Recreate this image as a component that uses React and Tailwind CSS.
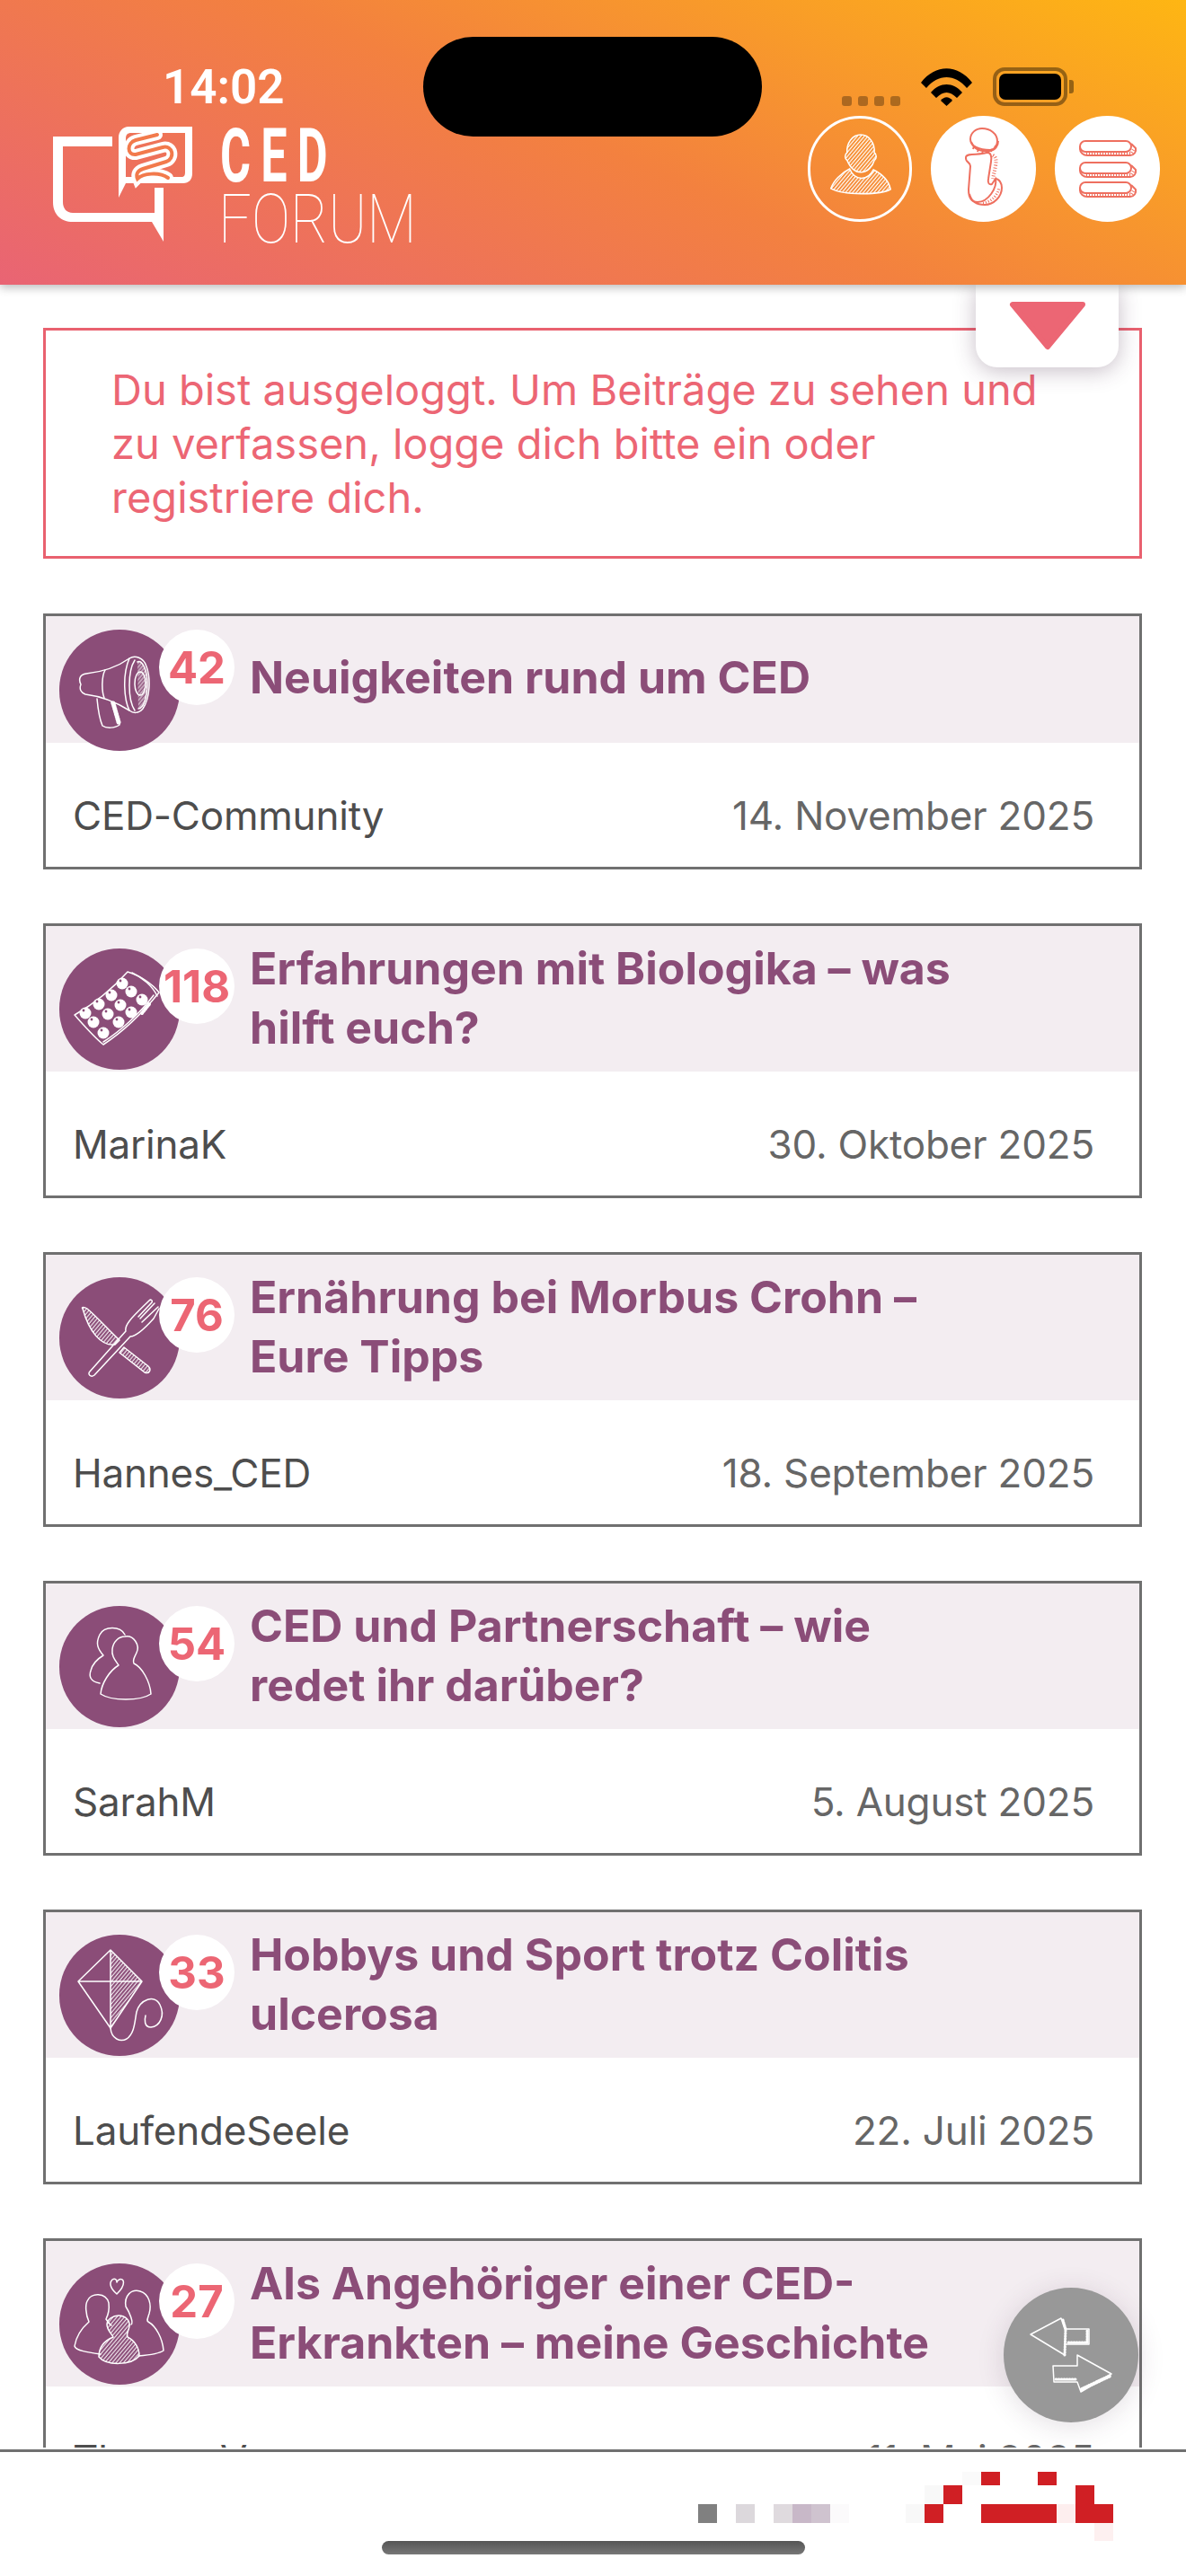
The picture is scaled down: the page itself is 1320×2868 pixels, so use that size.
import React from "react";

const Hatch = ({ id, color = "#fff", size = 4, width = 1 }) => (
  <defs>
    <pattern id={id} width={size} height={size} patternUnits="userSpaceOnUse" patternTransform="rotate(40)">
      <line x1="1" y1="0" x2="1" y2={size} stroke={color} strokeWidth={width} />
    </pattern>
  </defs>
);

const gutPath = "M116 9L92 15C82 18 82 32 92 31L122 23C134 20 136 36 126 39L100 47C94 49 92 53 94 58C100 52 118 50 128 57";

const Logo = () => (
  <svg viewBox="0 0 155 128" className="w-[155px] h-[128px] flex-none">
    <path fill="#fff" d="M66 11H0V84C0 98 9 106 22 106H110L123 128V68H113V96H22C15 96 11 91 11 84V22H66Z" />
    <path
      fill="#fff"
      fillRule="evenodd"
      d="M84 0H155V52C155 59 151 63 145 63H81L73 79V12C73 5 78 0 84 0ZM87 7C83 7 81 9 81 13V56H143C146 56 147 54 147 51V7Z"
    />
    <path fill="none" stroke="#fff" strokeWidth="12" strokeLinecap="round" d={gutPath} />
    <path fill="none" stroke="#f27a4c" strokeWidth="4" strokeLinecap="round" d={gutPath} />
  </svg>
);

const PersonIcon = () => (
  <svg viewBox="0 0 116 118" className="w-full h-full">
    <Hatch id="hatch-user" size={3.2} width={1.2} />
    <path
      fill="url(#hatch-user)"
      stroke="#fff"
      strokeWidth="1.6"
      d="M59 19C69 19 76 29 75 40C78 42 78 47 75 49C73 56 67 63 59 63C51 63 46 56 43 49C40 47 40 42 43 40C42 29 49 19 59 19Z"
    />
    <path
      fill="url(#hatch-user)"
      stroke="#fff"
      strokeWidth="1.6"
      d="M24 82C27 73 36 64 46 59C49 66 54 70 60 70C66 70 71 66 74 60C84 65 92 73 94 83C82 90 38 90 24 82Z"
    />
  </svg>
);

const InfoIcon = () => (
  <svg viewBox="0 0 117 118" className="w-full h-full">
    <g fill="none" stroke="#ee6f5f" strokeWidth="2">
      <path d="M44 26C44 19 50 14 57 14C66 14 74 20 74 28C74 33 71 38 66 38C54 38 44 34 44 26Z" fill="#fff" />
      <path d="M45 29C48 38 57 40 66 39C72 38 75 33 75 28" />
      <path d="M48 34L47 37M53 37L52 40M58 39L57 42M63 39L62 42M68 37L67 40M72 33L71 36" strokeWidth="2" />
      <path d="M39 46C40 41 54 44 62 41C67 40 68 46 67 51L64 70C63 75 65 77 68 76L72 70C74 80 64 96 52 96C45 96 42 90 42 82L44 56C44 51 38 52 39 46Z" />
      <path d="M43 87C45 96 52 99 60 99C70 99 79 90 79 80C79 75 76 70 72 70" />
      <path d="M69 44C73 46 73 50 72 56L69 70" strokeWidth="4" strokeDasharray="1 2" />
      <path d="M58 97C66 96 74 90 76 80" strokeWidth="3" strokeDasharray="1 2" />
    </g>
  </svg>
);

const MenuIcon = () => (
  <svg viewBox="0 0 117 118" className="w-full h-full">
    <g fill="none" stroke="#ee6f5f" strokeWidth="2">
      {[28, 52, 74].map((y) => (
        <g key={y}>
          <rect x="28" y={y} width="57" height="12" rx="6" />
          <path d={`M28 ${y + 6}V${y + 9}C28 ${y + 13} 32 ${y + 16} 36 ${y + 16}H84C88 ${y + 16} 91 ${y + 12} 90 ${y + 8}L85 ${y + 3}`} />
          <path d={`M35 ${y + 14}H85L88 ${y + 9}`} strokeWidth="4" strokeDasharray="1 2" />
        </g>
      ))}
    </g>
  </svg>
);

const Wifi = () => (
  <svg viewBox="0 0 57 42" className="w-[57px] h-[42px]">
    <path d="M0 16C16 -5 41 -5 57 16L51 22C38 6 19 6 6 22Z" />
    <path d="M11 27C21 15 36 15 46 27L40 33C32 25 25 25 17 33Z" />
    <path d="M22 36C26 31 31 31 35 36L28.5 42Z" />
  </svg>
);

const StatusBar = () => (
  <div className="absolute top-[41px] left-0 right-0 flex z-20">
    <div className="w-[471px] pl-[181px] pt-[26px] flex-none">
      <span className="block text-[53px] leading-[60px] font-semibold text-white font-['Roboto',sans-serif]">14:02</span>
    </div>
    <div className="w-[377px] h-[111px] bg-black rounded-full flex-none" />
    <div className="ml-[89px] h-[77px] flex items-end">
      <div className="flex gap-[7.5px]">
        {[0, 1, 2, 3].map((i) => (
          <div key={i} className="w-[10.5px] h-[11px] rounded-[3px] bg-black/30" />
        ))}
      </div>
      <div className="ml-[23px]">
        <Wifi />
      </div>
      <div className="ml-[23px] w-[83px] h-[43px] rounded-[13px] border-[4px] border-black/40 p-[3px]">
        <div className="w-full h-full rounded-[7px] bg-black" />
      </div>
      <div className="ml-[2px] mb-[14px] w-[5px] h-[15px] rounded-r-[3px] bg-black/40" />
    </div>
  </div>
);

const Header = () => (
  <header className="relative z-20 h-[317px] flex-none bg-linear-24/srgb from-[#e96474] via-[#f3813f] via-50% to-[#feb613] shadow-[0_3px_10px_rgba(0,0,0,0.28)] flex items-start justify-between pl-[59px] pr-[29px] pt-[129px]">
    <StatusBar />
    <div className="flex mt-[12px]">
      <Logo />
      <div className="ml-[29px] text-white font-['Roboto',sans-serif]">
        <div className="ml-[2px] h-[76px] leading-[66px] text-[84px] font-bold origin-left scale-x-[0.62] tracking-[18px]">CED</div>
        <div className="h-[54px] leading-[54px] text-[76px] font-thin origin-left scale-x-[0.85]">FORUM</div>
      </div>
    </div>
    <div className="flex gap-[21px]">
      <div className="w-[116px] h-[118px] rounded-full border-[3px] border-white">
        <PersonIcon />
      </div>
      <div className="w-[117px] h-[118px] rounded-full bg-white">
        <InfoIcon />
      </div>
      <div className="w-[117px] h-[118px] rounded-full bg-white">
        <MenuIcon />
      </div>
    </div>
  </header>
);

const stroke = { fill: "none", stroke: "#fff", strokeWidth: 1.5, strokeLinejoin: "round", strokeLinecap: "round" };

const Megaphone = () => (
  <>
    <Hatch id="hatch-mega" size={3} />
    <g {...stroke}>
      <path d="M30 49C23 50 21 55 24 61C22 66 24 70 29 72C45 74 62 80 78 90M30 49C48 47 64 42 78 32" />
      <path d="M51 45C47 52 47 68 50 76" />
      <path d="M78 32C84 28 94 31 97 41C102 55 101 76 93 88C88 94 82 93 78 90C72 78 70 50 78 32Z" />
      <path d="M84 34C76 46 76 78 84 90" />
      <path d="M87 36C93 33 98 47 98 60C98 74 94 88 88 88" fill="url(#hatch-mega)" />
      <ellipse cx="90" cy="60" rx="6" ry="13" />
      <path d="M42 77C43 88 45 100 48 107C52 110 62 110 67 106C68 100 62 90 58 81" />
      <path d="M60 82L66 103" strokeWidth="5" strokeDasharray="1 2" />
    </g>
  </>
);

const pills = [
  [29, 72], [44, 62], [58, 52], [70, 39],
  [38, 82], [54, 73], [68, 63], [80, 48],
  [49, 94], [66, 82], [80, 71], [92, 57],
];

const Blister = () => (
  <>
    <g {...stroke}>
      <path d="M17 74C38 62 58 46 76 26C90 30 104 40 111 49C94 70 72 92 49 107C38 98 26 84 17 74Z" />
      <path d="M81 27C92 32 104 42 109 53M49 104C68 92 90 72 105 52" />
      <path d="M100 62L92 72" strokeWidth="4" strokeDasharray="1 2" />
    </g>
    {pills.map(([x, y]) => (
      <g key={`${x}-${y}`}>
        <circle cx={x} cy={y} r="6.5" fill="#fff" />
        <circle cx={x - 2} cy={y - 3} r="1.4" fill="#8b4d78" />
      </g>
    ))}
  </>
);

const Cutlery = () => (
  <>
    <Hatch id="hatch-cut" size={3.2} />
    <g {...stroke}>
      <path d="M26 35C24 33 28 33 31 35C43 45 56 60 67 70L62 75C46 77 33 60 26 35Z" fill="url(#hatch-cut)" />
      <path d="M72 78L99 99C103 103 100 108 95 106L67 84Z" fill="url(#hatch-cut)" />
      <path d="M34 105C31 108 35 112 39 109L79 66C86 66 96 56 105 46L111 35M34 105L74 60C72 52 84 42 100 26C102 24 104 26 103 28L88 44M110 33L92 50M106 29L90 46" />
    </g>
  </>
);

const Couple = () => (
  <g {...stroke}>
    <path d="M45 86C34 84 33 78 35 72C37 64 44 58 49 55C43 48 40 42 45 32C50 22 68 22 73 32" />
    <path d="M73 34C83 32 90 44 86 52C84 57 81 60 83 64C92 68 101 84 102 98C90 106 58 106 46 98C47 86 56 72 66 66C62 60 58 56 59 48C60 40 66 34 73 34Z" />
  </g>
);

const Kite = () => (
  <>
    <Hatch id="hatch-kite" size={3.2} />
    <g {...stroke}>
      <path d="M57 17L92 52L57 104V17Z" fill="url(#hatch-kite)" stroke="none" />
      <path d="M57 17L92 52L57 104L21 52ZM57 17V104M21 52H92" />
      <path d="M57 104C58 116 68 120 75 116C84 110 84 96 86 86C90 72 106 66 112 78C118 90 112 102 102 103C94 103 95 94 96 90" />
    </g>
  </>
);

const Family = () => (
  <>
    <Hatch id="hatch-fam" size={3.2} />
    <g {...stroke}>
      <path d="M64 34C57 28 55 22 59 18C62 16 64 18 64 21C65 18 69 16 71 19C73 24 69 29 64 34Z" />
      <path d="M46 101C32 99 18 97 17 92C19 80 25 72 33 65C29 56 29 46 31 42C35 32 52 32 55 44C56 52 54 58 52 62C54 65 56 68 58 69" />
      <path d="M80 68C83 66 78 54 74 48C72 36 80 28 90 31C100 34 103 46 100 56C98 62 97 64 99 65C108 70 115 84 116 97C112 100 100 102 88 103" />
      <path
        d="M66 58C74 58 79 64 78 70C77 76 74 78 76 82C84 86 89 94 89 103C80 114 52 114 44 104C44 94 50 86 60 82C58 78 53 74 53 68C53 62 60 58 66 58Z"
        fill="url(#hatch-fam)"
      />
    </g>
  </>
);

const topics = [
  { title: "Neuigkeiten rund um CED", count: 42, author: "CED-Community", date: "14. November 2025", icon: <Megaphone />, single: true },
  { title: "Erfahrungen mit Biologika – was\nhilft euch?", count: 118, author: "MarinaK", date: "30. Oktober 2025", icon: <Blister /> },
  { title: "Ernährung bei Morbus Crohn –\nEure Tipps", count: 76, author: "Hannes_CED", date: "18. September 2025", icon: <Cutlery /> },
  { title: "CED und Partnerschaft – wie\nredet ihr darüber?", count: 54, author: "SarahM", date: "5. August 2025", icon: <Couple /> },
  { title: "Hobbys und Sport trotz Colitis\nulcerosa", count: 33, author: "LaufendeSeele", date: "22. Juli 2025", icon: <Kite /> },
  { title: "Als Angehöriger einer CED-\nErkrankten – meine Geschichte", count: 27, author: "ThomasV", date: "11. Mai 2025", icon: <Family /> },
];

const TopicCard = ({ topic }) => (
  <div className="border-[3px] border-[#707070] bg-white">
    <div className={`flex bg-[#f3edf1] pl-[15px] ${topic.single ? "h-[141px] pt-[15px]" : "h-[162px] pt-[25px]"}`}>
      <div className="relative w-[134px] h-[135px] rounded-full bg-[#8b4d78] flex-none">
        <svg viewBox="0 0 134 135" className="w-full h-full">
          {topic.icon}
        </svg>
        <div className="absolute left-[111px] top-0 w-[84px] h-[84px] rounded-full bg-white flex items-center justify-center text-[49px] leading-none font-bold text-[#ec6674]">
          {topic.count}
        </div>
      </div>
      <h3
        className={`ml-[78px] text-[50px] leading-[66px] font-bold text-[#8b4d78] whitespace-pre-line ${
          topic.single ? "mt-[20px]" : "mt-[-11px]"
        }`}
      >
        {topic.title}
      </h3>
    </div>
    <div className="h-[138px] pt-[51px] pl-[30px] pr-[50px] flex justify-between text-[44px] leading-[60px] tracking-[-0.2px]">
      <span className="text-[#4d4d4d]">{topic.author}</span>
      <span className="text-[#666666]">{topic.date}</span>
    </div>
  </div>
);

// censored logo block in the bottom bar, coordinates are from x=777 y=2752
const blocks = [
  [0, 36, 21, 21, "#808080"],
  [42, 36, 21, 21, "#dcd8dc"],
  [84, 36, 21, 21, "#dfdade"],
  [105, 36, 21, 21, "#c8b8c8"],
  [126, 36, 21, 21, "#cfc3cf"],
  [147, 36, 21, 21, "#fbfafb"],
  [294, 0, 21, 15, "#fafafa"],
  [315, 0, 21, 15, "#d01f24"],
  [378, 0, 21, 15, "#d01f24"],
  [252, 15, 21, 21, "#f8f8f8"],
  [273, 15, 21, 21, "#d01f24"],
  [420, 15, 21, 21, "#d01f24"],
  [231, 36, 21, 21, "#f8f8f8"],
  [252, 36, 21, 21, "#d01f24"],
  [315, 36, 84, 21, "#d01f24"],
  [399, 36, 21, 21, "#fdeeee"],
  [420, 36, 42, 21, "#d01f24"],
  [441, 57, 21, 21, "#fdf0f0"],
];

const BottomBar = () => (
  <div className="flex-1 bg-white pt-[2px]">
    <div className="h-full border-t-[3px] border-[#707070] pt-[22px] pl-[777px]">
      <svg viewBox="0 0 483 77" className="w-[483px] h-[77px] block">
        {blocks.map(([x, y, w, h, fill], i) => (
          <rect key={i} x={x} y={y} width={w} height={h} fill={fill} />
        ))}
      </svg>
      <div className="ml-[-352px] w-[471px] h-[15px] rounded-full bg-linear-to-b from-[#555555] to-[#777777]" />
    </div>
  </div>
);

export default function App() {
  return (
    <div className="relative w-[1320px] h-[2868px] overflow-hidden bg-white flex flex-col font-['Inter',sans-serif]">
      <Header />

      {/* toggle tab under the header */}
      <div className="absolute z-10 left-[1086px] top-[317px] w-[159px] h-[92px] bg-white rounded-b-[24px] shadow-[0_4px_24px_rgba(70,40,70,0.3)] flex justify-center pt-[18px]">
        <svg viewBox="0 0 86 55" className="w-[86px] h-[55px]">
          <path d="M4 4H82L43 51Z" fill="#ec6674" stroke="#ec6674" strokeWidth="6" strokeLinejoin="round" />
        </svg>
      </div>

      <main className="h-[2408px] flex-none overflow-hidden pl-[48px] pt-[48px] pr-[49px]">
        <div className="border-[3px] border-[#e9616f] h-[257px] mb-[61px] pl-[73px] pt-[36px] text-[47px] leading-[60px] text-[#ec6674]">
          Du bist ausgeloggt. Um Beiträge zu sehen und
          <br />
          zu verfassen, logge dich bitte ein oder
          <br />
          registriere dich.
        </div>
        <div className="flex flex-col gap-[60px]">
          {topics.map((topic) => (
            <TopicCard key={topic.count} topic={topic} />
          ))}
        </div>
      </main>

      <BottomBar />

      {/* floating switch button */}
      <div className="absolute z-10 left-[1117px] top-[2547px] w-[150px] h-[150px] rounded-full bg-[#989898] shadow-[0_4px_30px_rgba(70,40,70,0.15)]">
        <svg viewBox="0 0 150 150" className="w-full h-full">
          <g {...stroke}>
            <path d="M30 52L64 34L68 46H95V63H68V75Z" />
            <path d="M66 36L69 46L68 75" strokeWidth="3" strokeDasharray="1 2" />
            <path d="M72 61H93V46" strokeWidth="3" strokeDasharray="1 2" />
            <path d="M55 87H82V75L120 96L86 116L82 105H56Z" />
            <path d="M58 102H80" strokeWidth="3" strokeDasharray="1 2" />
            <path d="M87 113L119 98" strokeWidth="4" strokeDasharray="1 2" />
          </g>
        </svg>
      </div>
    </div>
  );
}
